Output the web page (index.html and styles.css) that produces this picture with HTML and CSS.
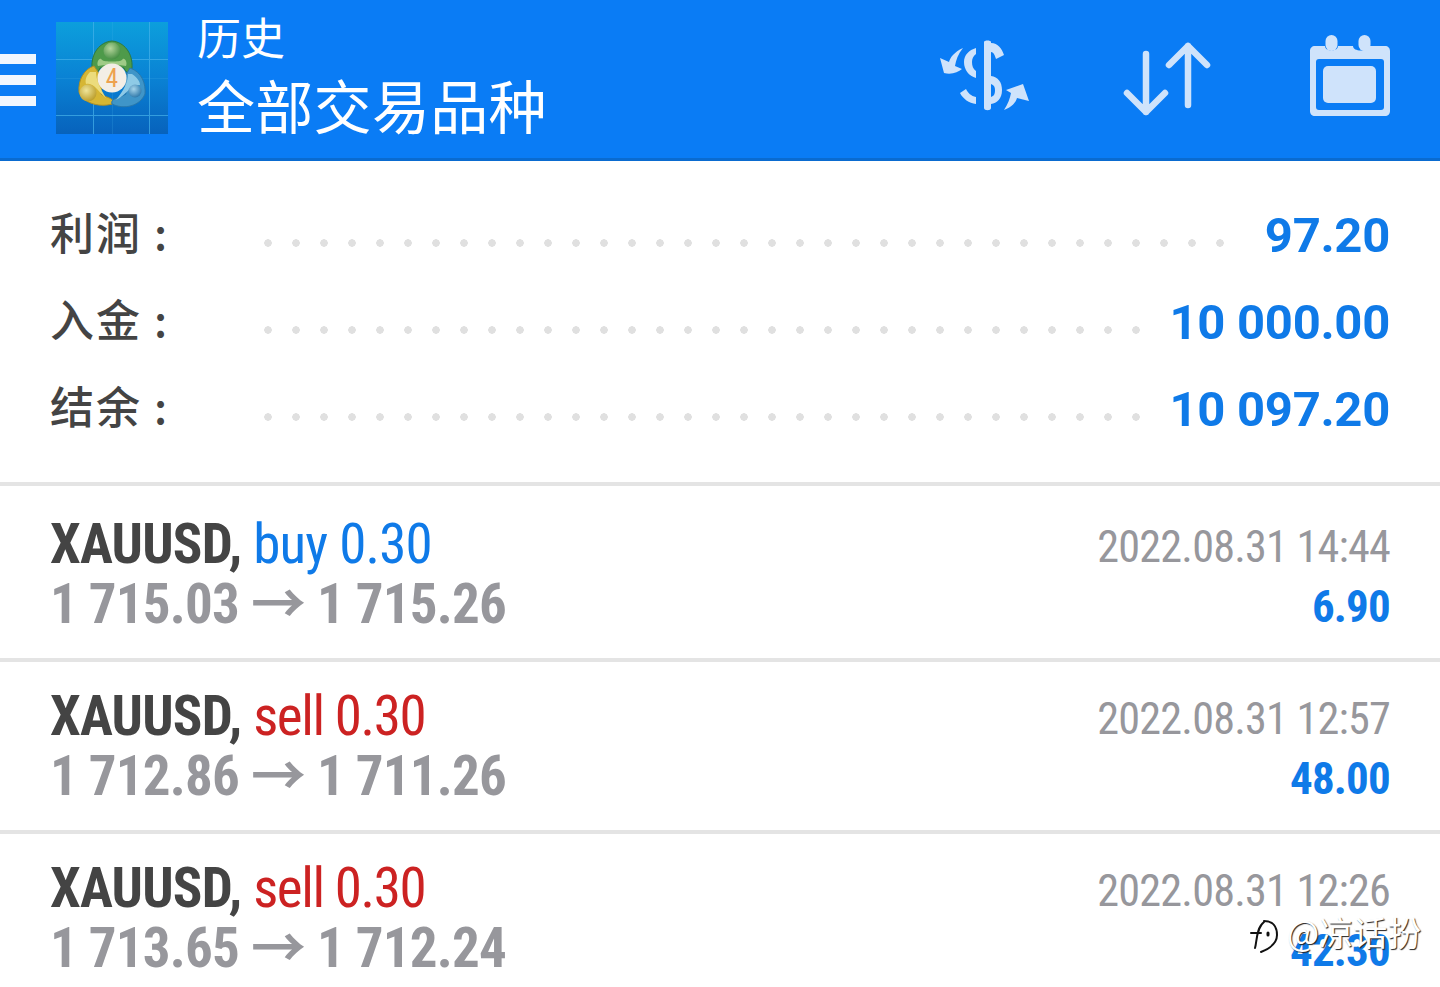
FILE: index.html
```html
<!DOCTYPE html>
<html lang="zh">
<head>
    <meta charset="UTF-8">
    <title>历史</title>
    <link rel="stylesheet" href="styles.css">
</head>
<body>
    <header class="toolbar">
        <div class="menu-icon"><span></span><span></span><span></span></div>
        <svg class="logo" viewBox="0 0 112 112" width="112" height="112">
            <defs>
                <linearGradient id="logo-bg" x1="0" y1="0" x2="0" y2="1">
                    <stop offset="0" stop-color="#0c9fdc"/>
                    <stop offset="0.5" stop-color="#0a82d4"/>
                    <stop offset="1" stop-color="#0762bc"/>
                </linearGradient>
                <radialGradient id="head-green" cx="0.4" cy="0.35" r="0.7">
                    <stop offset="0" stop-color="#b5d69c"/>
                    <stop offset="1" stop-color="#3f8a3f"/>
                </radialGradient>
                <radialGradient id="head-yellow" cx="0.4" cy="0.35" r="0.7">
                    <stop offset="0" stop-color="#efe59a"/>
                    <stop offset="1" stop-color="#b99a26"/>
                </radialGradient>
                <radialGradient id="head-blue" cx="0.4" cy="0.35" r="0.7">
                    <stop offset="0" stop-color="#a6d4ea"/>
                    <stop offset="1" stop-color="#2a75a8"/>
                </radialGradient>
            </defs>
            <rect width="112" height="112" fill="url(#logo-bg)"/>
            <path d="M0 37.500H112M0 93.500H112M37.500 0V112M93.500 0V112" stroke="#46b2ea" stroke-width="1" opacity="0.7"/>
            <path d="M0 56.500H112M56.500 0V112" stroke="#46b2ea" stroke-width="1" opacity="0.2"/>
            <path d="M56 19C44 20 35 31 36 46C37 52 42 52 44 46L56 44L68 46C70 52 75 52 76 46C77 31 68 20 56 19Z" fill="#4e9a4a" stroke="#2f7a3c" stroke-width="1"/>
            <path d="M46 38C48 40 64 40 66 38C68 34 72 40 70 44L56 42L42 44C40 40 44 34 46 38Z" fill="#9fcb86"/>
            <path d="M38 44C28 47 22 58 23 70C26 80 42 86 56 82C60 76 50 76 45 72L46 56Z" fill="#d6b634" stroke="#b08f22" stroke-width="1"/>
            <path d="M34 50C30 54 29 58 30 62C38 60 42 70 50 76C44 66 40 58 40 50Z" fill="#ecdc7c"/>
            <path d="M74 46C86 50 90 62 89 72C84 84 68 88 56 82C54 76 64 76 70 72L68 56Z" fill="#3f95c8" stroke="#2a78aa" stroke-width="1"/>
            <path d="M76 52C82 56 84 60 84 63C74 62 72 72 60 78C68 68 72 60 72 52Z" fill="#8ecae6"/>
            <circle cx="56" cy="29" r="8.500" fill="url(#head-green)"/>
            <circle cx="32" cy="71" r="8.500" fill="url(#head-yellow)"/>
            <circle cx="79" cy="69" r="6.500" fill="url(#head-blue)"/>
            <circle cx="56" cy="56" r="14.500" fill="#f3eee6"/>
            <text x="56" y="65" class="logo-num">4</text>
        </svg>
        <div class="titles">
            <div class="title-small">历史</div>
            <div class="title-main">全部交易品种</div>
        </div>
        <div class="actions">
            <svg class="icon" viewBox="0 0 92 72" width="92" height="72" fill="#cfe3fb">
                <g transform="translate(4 0)">
                    <path d="M42 2C42 0 49 0 49 2V68C49 71 42 71 42 68Z"/>
                    <path d="M49 3C56 3 60 9 62 15L54 19C53 16 52 12 49 12Z"/>
                    <path d="M49 36C56 37 60 42 60 50C60 59 55 63 49 64V57C52 56 53 54 53 50C53 47 52 45 49 44Z"/>
                </g>
                <path d="M38 8V14C35 16 34 19 34 22C34 26 35 29 38 31V38C31 36 26 30 26 22C26 15 31 10 38 8Z"/>
                <path d="M38 64V57C33 56 30 53 28 49L22 53C25 59 31 63 38 64Z"/>
                <path d="M25 8C16 12 12 18 11 22L2 18L6 33C14 35 20 32 24 29L17 26C18 20 20 14 25 8Z"/>
                <path d="M66 70C74 67 78 62 79 58L91 61L85 44L68 50L73 53C72 58 70 64 66 70Z"/>
            </svg>
            <svg class="icon" viewBox="0 0 96 84" width="96" height="84" fill="none" stroke="#cfe3fb" stroke-width="6.500" stroke-linecap="round" stroke-linejoin="round">
                <path d="M24 20V78M5 59L24 78L43 59"/>
                <path d="M66 71V12M47 31L66 12L85 31"/>
            </svg>
            <svg class="icon" viewBox="0 0 82 84" width="82" height="84">
                <path d="M5 12H15C15 18 28 18 28 12H43C43 18 58 18 58 12H75C78 12 80 14 80 17V77C80 80 78 82 75 82H5C2 82 0 80 0 77V17C0 14 2 12 5 12Z" fill="#cfe3fb"/>
                <rect x="15.500" y="1" width="12" height="16" rx="6" fill="#cfe3fb"/>
                <rect x="48.500" y="1" width="12" height="16" rx="6" fill="#cfe3fb"/>
                <rect x="6" y="25" width="68" height="51" rx="3" fill="#0a7cf5"/>
                <rect x="13" y="32" width="53" height="37" rx="5" fill="#cfe3fb"/>
            </svg>
        </div>
    </header>

    <section class="summary">
        <div class="sum-row">
            <span class="sum-label">利润 :</span>
            <span class="dots"></span>
            <span class="sum-value">97.20</span>
        </div>
        <div class="sum-row">
            <span class="sum-label">入金 :</span>
            <span class="dots"></span>
            <span class="sum-value">10 000.00</span>
        </div>
        <div class="sum-row">
            <span class="sum-label">结余 :</span>
            <span class="dots"></span>
            <span class="sum-value">10 097.20</span>
        </div>
    </section>

    <section class="trades">
        <div class="trade">
            <div class="trade-left">
                <div class="line-top"><b>XAUUSD,</b> <span class="buy">buy 0.30</span></div>
                <div class="line-price">1 715.03 → 1 715.26</div>
            </div>
            <div class="trade-right">
                <div class="trade-date">2022.08.31 14:44</div>
                <div class="trade-profit">6.90</div>
            </div>
        </div>
        <div class="trade">
            <div class="trade-left">
                <div class="line-top"><b>XAUUSD,</b> <span class="sell">sell 0.30</span></div>
                <div class="line-price">1 712.86 → 1 711.26</div>
            </div>
            <div class="trade-right">
                <div class="trade-date">2022.08.31 12:57</div>
                <div class="trade-profit">48.00</div>
            </div>
        </div>
        <div class="trade">
            <div class="trade-left">
                <div class="line-top"><b>XAUUSD,</b> <span class="sell">sell 0.30</span></div>
                <div class="line-price">1 713.65 → 1 712.24</div>
            </div>
            <div class="trade-right">
                <div class="trade-date">2022.08.31 12:26</div>
                <div class="trade-profit">42.30</div>
            </div>
        </div>
    </section>

    <div class="watermark">
        <svg viewBox="0 0 30 36" width="30" height="36" fill="none" stroke="#111" stroke-width="2" stroke-linecap="round">
            <path d="M15 3C24 3 28 9 28 17C28 24 22 30 12 34"/>
            <path d="M6 30C8 24 7 10 15 4"/>
            <path d="M2 15H12"/>
            <path d="M19 15V17" stroke-width="3"/>
        </svg>
        <span class="watermark-text">@凉话扮</span>
    </div>
</body>
</html>
```

FILE: styles.css
```css
html, body {
    margin: 0;
    height: 987px;
    overflow: hidden;
}
body {
    position: relative;
    background-color: #fff;
    font-family: Roboto, "Noto Sans CJK SC", sans-serif;
    font-stretch: 75%;
}
.toolbar {
    display: flex;
    align-items: center;
    height: 158px;
    background-color: #0a7cf5;
    border-bottom: 3px solid #0a6bd0;
}
.menu-icon {
    display: flex;
    flex-direction: column;
    gap: 11px;
    width: 36px;
    margin-top: 1px;
}
.menu-icon span {
    height: 10px;
    background-color: #f0f6fe;
}
.logo {
    margin-left: 20px;
    margin-top: -2px;
}
.logo-num {
    font-family: Roboto, sans-serif;
    font-size: 25px;
    font-weight: 400;
    fill: #eda24e;
    text-anchor: middle;
}
.titles {
    margin-left: 29px;
    color: #fff;
    font-family: "Noto Sans CJK SC", sans-serif;
    font-weight: 400;
}
.title-small {
    font-size: 44px;
    line-height: 52px;
    margin-top: -11px;
}
.title-main {
    font-size: 58px;
    line-height: 66px;
    margin-top: 9px;
    letter-spacing: 0.3px;
}
.actions {
    display: flex;
    align-items: center;
    gap: 92px;
    margin-left: auto;
    margin-right: 48px;
    margin-top: -6px;
}
.icon {
    display: block;
}
.summary {
    display: flex;
    flex-direction: column;
    gap: 27px;
    height: 325px;
    padding: 44px 50px 0;
    box-sizing: border-box;
    border-bottom: 4px solid #e4e4e4;
}
.sum-row {
    display: flex;
    align-items: center;
    height: 60px;
}
.sum-label {
    width: 204px;
    margin-bottom: 8px;
    color: #444;
    font-family: "Noto Sans CJK SC", sans-serif;
    font-size: 44px;
    font-weight: 500;
    letter-spacing: 2px;
}
.dots {
    flex: 1;
    height: 8px;
    margin-top: 15px;
    margin-right: 30px;
    background-image: radial-gradient(circle, #e0e0e0 3.500px, transparent 4px);
    background-size: 28px 8px;
    background-repeat: repeat-x;
}
.sum-value {
    color: #0f7ae8;
    font-size: 49px;
    font-weight: 700;
    font-stretch: 100%;
    letter-spacing: -0.3px;
    white-space: nowrap;
}
.trades {
    padding-top: 4px;
}
.trade {
    display: flex;
    justify-content: space-between;
    height: 168px;
    padding: 0 50px;
    border-bottom: 4px solid #e4e4e4;
}
.line-top {
    margin-top: 24px;
    font-size: 55px;
    line-height: 60px;
    letter-spacing: -0.8px;
    color: #444;
    white-space: nowrap;
}
.line-top b {
    font-weight: 700;
}
.buy {
    color: #0f7ae8;
}
.sell {
    color: #cc2222;
    letter-spacing: -1.400px;
}
.line-price {
    font-size: 55px;
    line-height: 60px;
    letter-spacing: -0.8px;
    font-weight: 700;
    color: #97979c;
    white-space: nowrap;
}
.trade-right {
    text-align: right;
}
.trade-date {
    margin-top: 27px;
    font-size: 44.200px;
    line-height: 60px;
    letter-spacing: -0.8px;
    color: #97979c;
}
.trade-profit {
    font-size: 45px;
    line-height: 60px;
    letter-spacing: -0.8px;
    font-weight: 700;
    color: #0f7ae8;
}
.watermark {
    position: absolute;
    left: 1249px;
    top: 912px;
    display: flex;
    align-items: center;
    gap: 8px;
    color: #fff;
    font-family: "Noto Sans CJK SC", sans-serif;
    font-size: 34px;
    line-height: 40px;
    text-shadow: 1px 1px 1px #222;
}
.watermark-text {
    margin-bottom: 8px;
}
```
